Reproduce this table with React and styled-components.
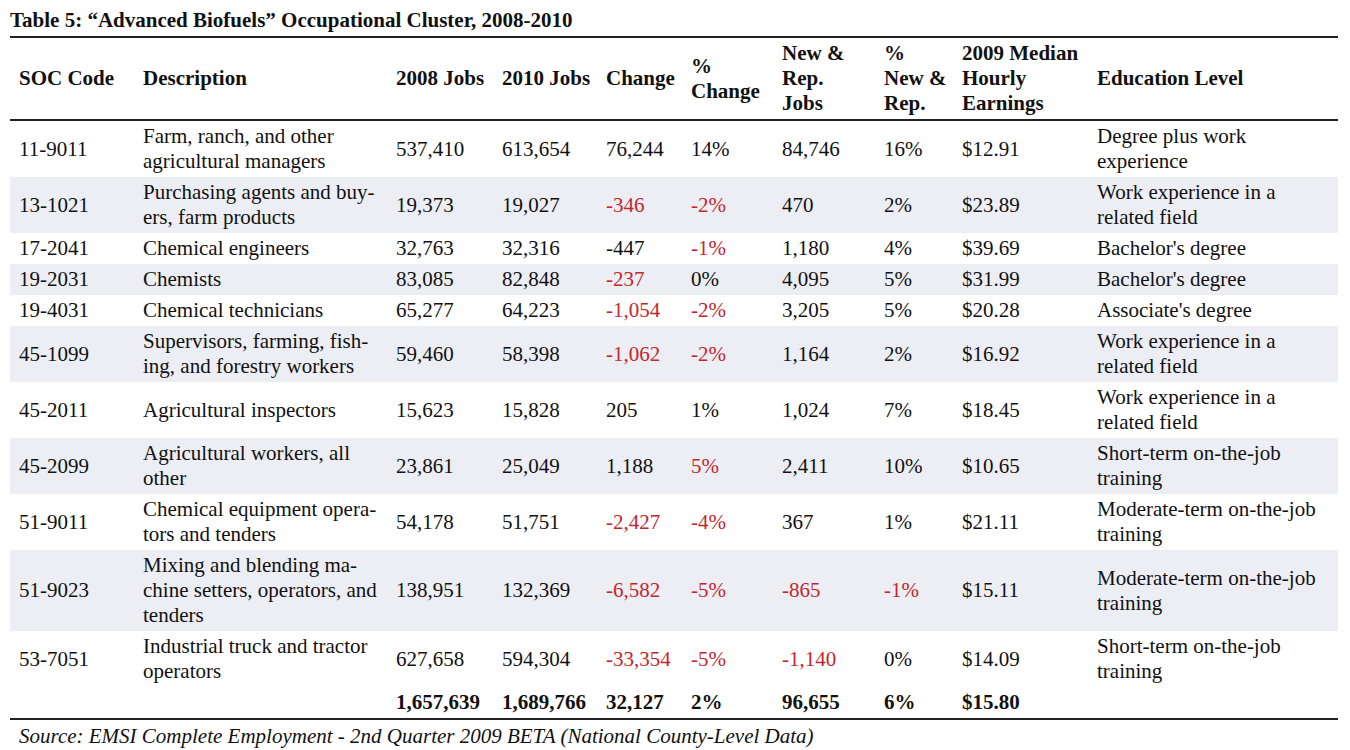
import React from "react";
import styled, { createGlobalStyle } from "styled-components";

const GlobalStyle = createGlobalStyle`
  body {
    margin: 0;
    background: #ffffff;
    color: #111111;
    font-family: "Liberation Serif", "Times New Roman", serif;
  }
`;

const Page = styled.div`
  padding: 8px 12px 0 10px;
  width: 1328px;
`;

const Title = styled.h1`
  margin: 0 0 3px;
  font-size: 21px;
  line-height: 25px;
  font-weight: bold;
`;

const Table = styled.table`
  width: 1328px;
  table-layout: fixed;
  border-spacing: 0;
  font-family: "Liberation Serif", "Times New Roman", serif;
  font-size: 21px;
  line-height: 25px;
`;

const HeadCell = styled.th`
  text-align: left;
  font-weight: bold;
  vertical-align: middle;
  padding: 3px 9px;
  white-space: nowrap;
  border-top: 2px solid #222;
  border-bottom: 2px solid #222;
`;

const Row = styled.tr`
  background: ${(props) => (props.shaded ? "#eceef4" : "#ffffff")};
`;

const Cell = styled.td`
  padding: 3px 9px;
  vertical-align: middle;
  white-space: nowrap;
  color: ${(props) => (props.neg ? "#c4262e" : "#111111")};
`;

const TotalCell = styled(Cell)`
  font-weight: bold;
  border-bottom: 2px solid #222;
`;

const Source = styled.p`
  margin: 4px 0 0;
  padding-left: 9px;
  font-size: 21px;
  line-height: 25px;
  font-style: italic;
`;

const widths = [124, 253, 106, 104, 85, 91, 102, 78, 135, 250];

const headers = [
  ["SOC Code"],
  ["Description"],
  ["2008 Jobs"],
  ["2010 Jobs"],
  ["Change"],
  ["%", "Change"],
  ["New &", "Rep.", "Jobs"],
  ["%", "New &", "Rep."],
  ["2009 Median", "Hourly", "Earnings"],
  ["Education Level"],
];

// last entry: indexes of columns shown in red
const rows = [
  ["11-9011", ["Farm, ranch, and other", "agricultural managers"], "537,410", "613,654", "76,244", "14%", "84,746", "16%", "$12.91", ["Degree plus work", "experience"], []],
  ["13-1021", ["Purchasing agents and buy-", "ers, farm products"], "19,373", "19,027", "-346", "-2%", "470", "2%", "$23.89", ["Work experience in a", "related field"], [4, 5]],
  ["17-2041", ["Chemical engineers"], "32,763", "32,316", "-447", "-1%", "1,180", "4%", "$39.69", ["Bachelor's degree"], [5]],
  ["19-2031", ["Chemists"], "83,085", "82,848", "-237", "0%", "4,095", "5%", "$31.99", ["Bachelor's degree"], [4]],
  ["19-4031", ["Chemical technicians"], "65,277", "64,223", "-1,054", "-2%", "3,205", "5%", "$20.28", ["Associate's degree"], [4, 5]],
  ["45-1099", ["Supervisors, farming, fish-", "ing, and forestry workers"], "59,460", "58,398", "-1,062", "-2%", "1,164", "2%", "$16.92", ["Work experience in a", "related field"], [4, 5]],
  ["45-2011", ["Agricultural inspectors"], "15,623", "15,828", "205", "1%", "1,024", "7%", "$18.45", ["Work experience in a", "related field"], []],
  ["45-2099", ["Agricultural workers, all", "other"], "23,861", "25,049", "1,188", "5%", "2,411", "10%", "$10.65", ["Short-term on-the-job", "training"], [5]],
  ["51-9011", ["Chemical equipment opera-", "tors and tenders"], "54,178", "51,751", "-2,427", "-4%", "367", "1%", "$21.11", ["Moderate-term on-the-job", "training"], [4, 5]],
  ["51-9023", ["Mixing and blending ma-", "chine setters, operators, and", "tenders"], "138,951", "132,369", "-6,582", "-5%", "-865", "-1%", "$15.11", ["Moderate-term on-the-job", "training"], [4, 5, 6, 7]],
  ["53-7051", ["Industrial truck and tractor", "operators"], "627,658", "594,304", "-33,354", "-5%", "-1,140", "0%", "$14.09", ["Short-term on-the-job", "training"], [4, 5, 6]],
];

const totals = ["", "", "1,657,639", "1,689,766", "32,127", "2%", "96,655", "6%", "$15.80", ""];

const Lines = ({ lines }) =>
  lines.map((line, i) => (
    <React.Fragment key={i}>
      {i > 0 && <br />}
      {line}
    </React.Fragment>
  ));

const App = () => (
  <Page>
    <GlobalStyle />
    <Title>Table 5: “Advanced Biofuels” Occupational Cluster, 2008-2010</Title>
    <Table>
      <colgroup>
        {widths.map((w, i) => (
          <col key={i} style={{ width: w }} />
        ))}
      </colgroup>
      <thead>
        <tr>
          {headers.map((h, i) => (
            <HeadCell key={i}>
              <Lines lines={h} />
            </HeadCell>
          ))}
        </tr>
      </thead>
      <tbody>
        {rows.map((row, r) => {
          const red = row[10];
          return (
            <Row key={row[0]} shaded={r % 2 === 1}>
              {row.slice(0, 10).map((value, c) => (
                <Cell key={c} neg={red.includes(c)}>
                  {Array.isArray(value) ? <Lines lines={value} /> : value}
                </Cell>
              ))}
            </Row>
          );
        })}
        <Row>
          {totals.map((value, c) => (
            <TotalCell key={c}>{value}</TotalCell>
          ))}
        </Row>
      </tbody>
    </Table>
    <Source>Source: EMSI Complete Employment - 2nd Quarter 2009 BETA (National County-Level Data)</Source>
  </Page>
);

export default App;
